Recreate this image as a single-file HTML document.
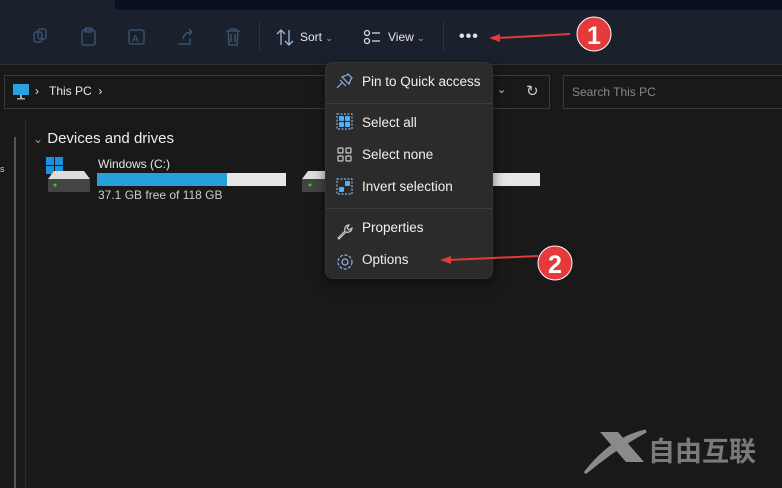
<!DOCTYPE html>
<html><head><meta charset="utf-8"><style>
*{margin:0;padding:0;box-sizing:border-box}
body{width:782px;height:488px;background:#191919;font-family:"Liberation Sans","Noto Sans CJK SC",sans-serif;color:#fff;position:relative;overflow:hidden}
.a{position:absolute}
.t{font-size:12px;color:#e6e6e6}
.mi{position:absolute;left:36px;font-size:13.5px;color:#f0f0f0}
</style></head><body>
<div class="a" style="left:0;top:0;width:782px;height:64px;background:#1b212c"></div>
<div class="a" style="left:115px;top:0;width:667px;height:10px;background:#0a1020;border-radius:0 0 0 4px"></div>
<div class="a" style="left:0;top:64px;width:782px;height:1px;background:#2c2f35"></div>
<svg class="a" style="left:0;top:20px" width="520" height="36" fill="none" stroke="#3d5875" stroke-width="1.3">
<rect x="34" y="12" width="8" height="10" rx="2"/><rect x="38" y="9" width="8" height="10" rx="2"/>
<rect x="82" y="10" width="13" height="15" rx="2"/><rect x="85" y="8" width="7" height="4" rx="1"/>
<rect x="129" y="10" width="15" height="14" rx="2"/><text x="132" y="22" font-size="10" fill="#3d5875" stroke="none" font-family="Liberation Sans">A</text>
<path d="M178 24h12v-6M183 19c1-5 4-7 9-7M189 9l3 3-3 3"/>
<path d="M226 11h14M230 11v-2h6v2M228 11l1 14h8l1-14M231 14v8M235 14v8"/>
<path d="M281 10v15M277 14l4-4 4 4M289 10v15M285 21l4 4 4-4" stroke="#9fb8d8"/>
<circle cx="367" cy="13" r="2.5" stroke="#ddd"/><circle cx="367" cy="21" r="2.5" stroke="#ddd"/><path d="M372 13h8M372 21h8" stroke="#ddd"/>
</svg>
<div class="a" style="left:259px;top:22px;width:1px;height:30px;background:#30343c"></div>
<div class="a" style="left:443px;top:22px;width:1px;height:30px;background:#30343c"></div>
<div class="a t" style="left:300px;top:30px;font-size:12px">Sort <span style="font-size:9px;color:#aaa">&#8964;</span></div>
<div class="a t" style="left:388px;top:30px;font-size:12px">View <span style="font-size:9px;color:#aaa">&#8964;</span></div>
<div class="a" style="left:459px;top:28px;font-size:16px;font-weight:bold;letter-spacing:1px;color:#ddd">•••</div>
<div class="a" style="left:4px;top:75px;width:546px;height:34px;border:1px solid #3a3a3a"></div>
<svg class="a" style="left:12px;top:83px" width="18" height="18"><rect x="1" y="1" width="16" height="11" fill="#29a3df"/><rect x="8" y="12" width="2" height="3" fill="#aaa"/><rect x="5" y="15" width="8" height="1.5" fill="#aaa"/></svg>
<div class="a t" style="left:35px;top:84px">›&nbsp;&nbsp;&nbsp;This PC&nbsp;&nbsp;›</div>
<div class="a t" style="left:497px;top:83px;font-size:11px;color:#ccc">&#8964;</div>
<div class="a t" style="left:526px;top:82px;font-size:15px;color:#ccc">↻</div>
<div class="a" style="left:563px;top:75px;width:230px;height:34px;border:1px solid #3a3a3a"></div>
<div class="a" style="left:572px;top:85px;font-size:12px;color:#888">Search This PC</div>
<div class="a" style="left:14px;top:137px;width:2px;height:351px;background:#555"></div>
<div class="a" style="left:25px;top:120px;width:1px;height:368px;background:#2a2a2a"></div>
<div class="a" style="left:0;top:164px;font-size:9px;color:#ccc">s</div>
<div class="a" style="left:33px;top:130px;font-size:15px;color:#eee"><span style="color:#999;font-size:12px">&#8964;</span> Devices and drives</div>
<svg class="a" style="left:46px;top:157px" width="46" height="36"><rect x="0" y="0" width="8" height="8" fill="#1e90e0"/><rect x="9" y="0" width="8" height="8" fill="#1e90e0"/><rect x="0" y="9" width="8" height="8" fill="#1e90e0"/><rect x="9" y="9" width="8" height="8" fill="#1e90e0"/><path d="M8 14h30l6 8H2z" fill="#ddd"/><rect x="2" y="22" width="42" height="13" rx="1" fill="#444"/><circle cx="9" cy="28" r="1.5" fill="#3c3"/></svg>
<div class="a t" style="left:98px;top:157px">Windows (C:)</div>
<div class="a" style="left:97px;top:173px;width:189px;height:13px;background:#e6e6e6"><div style="width:130px;height:13px;background:#26a0da"></div></div>
<div class="a t" style="left:98px;top:188px;color:#ccc">37.1 GB free of 118 GB</div>
<svg class="a" style="left:302px;top:171px" width="24" height="22"><path d="M6 0h18v8H0z" fill="#ddd"/><rect x="0" y="8" width="24" height="13" fill="#444"/><circle cx="8" cy="14" r="1.5" fill="#3c3"/></svg>
<div class="a" style="left:493px;top:173px;width:47px;height:13px;background:#e6e6e6"></div>
<div class="a" style="left:325px;top:62px;width:168px;height:217px;background:#2b2b2b;border-radius:8px;border:1px solid #353535;box-shadow:0 4px 12px rgba(0,0,0,.5)">
<div class="a" style="left:0;top:40px;width:166px;height:1px;background:#3c3c3c"></div>
<div class="a" style="left:0;top:145px;width:166px;height:1px;background:#3c3c3c"></div>
<div class="mi" style="top:11px">Pin to Quick access</div>
<div class="mi" style="top:52px">Select all</div>
<div class="mi" style="top:84px">Select none</div>
<div class="mi" style="top:116px">Invert selection</div>
<div class="mi" style="top:157px">Properties</div>
<div class="mi" style="top:189px">Options</div>
<svg class="a" style="left:9px;top:8px" width="20" height="200" fill="none" stroke="#8ab4e0" stroke-width="1.2">
<path d="M2 17l5-5M5 9l6 6M7 6l7 7 2-5 1-1-4-4-1 1z"/>
<rect x="2" y="43" width="15" height="15" stroke-dasharray="2 1.5"/><rect x="4" y="45" width="5" height="5" rx="1" fill="#4fb0ff" stroke="none"/><rect x="10" y="45" width="5" height="5" rx="1" fill="#4fb0ff" stroke="none"/><rect x="4" y="51" width="5" height="5" rx="1" fill="#4fb0ff" stroke="none"/><rect x="10" y="51" width="5" height="5" rx="1" fill="#4fb0ff" stroke="none"/>
<g stroke="#ccc"><rect x="3" y="77" width="5" height="5" rx="1"/><rect x="11" y="77" width="5" height="5" rx="1"/><rect x="3" y="85" width="5" height="5" rx="1"/><rect x="11" y="85" width="5" height="5" rx="1"/></g>
<rect x="2" y="108" width="15" height="15" stroke-dasharray="2 1.5"/><rect x="10" y="110" width="5" height="5" rx="1" fill="#4fb0ff" stroke="none"/><rect x="4" y="116" width="5" height="5" rx="1" fill="#4fb0ff" stroke="none"/>
<path d="M3 167l7-7c-1-3 1-6 4-6l-2 3 2 2 3-2c0 3-3 5-6 4l-7 7z" stroke="#ccc"/>
<circle cx="10" cy="191" r="3" stroke="#8ab4e0"/><circle cx="10" cy="191" r="7" stroke="#8ab4e0" stroke-dasharray="3 1.6"/>
</svg>
</div>
<svg class="a" style="left:0;top:0" width="782" height="488">
<path d="M570 34L498 38" stroke="#e03a3a" stroke-width="2"/><path d="M489 38l11-4v8z" fill="#e03a3a"/>
<circle cx="594" cy="34" r="17" fill="#e5393b" stroke="#fff" stroke-width="1"/>
<text x="594" y="44" font-size="25" font-family="Liberation Sans" font-weight="bold" fill="#fff" text-anchor="middle">1</text>
<path d="M538 256L448 260" stroke="#e03a3a" stroke-width="2"/><path d="M440 260l11-4v8z" fill="#e03a3a"/>
<circle cx="555" cy="263" r="17" fill="#e5393b" stroke="#fff" stroke-width="1"/>
<text x="555" y="273" font-size="25" font-family="Liberation Sans" font-weight="bold" fill="#fff" text-anchor="middle">2</text>
<path d="M600 432h18l26 30h-18z" fill="#8a8a8a"/>
<path d="M646 431Q612 438 585 473Q616 447 646 431z" fill="#8a8a8a" stroke="#8a8a8a" stroke-width="3"/>
<text x="648" y="461" font-size="27" font-weight="bold" fill="#7a7a7a" font-family="Noto Sans CJK SC,sans-serif">自由互联</text>
</svg>
</body></html>
